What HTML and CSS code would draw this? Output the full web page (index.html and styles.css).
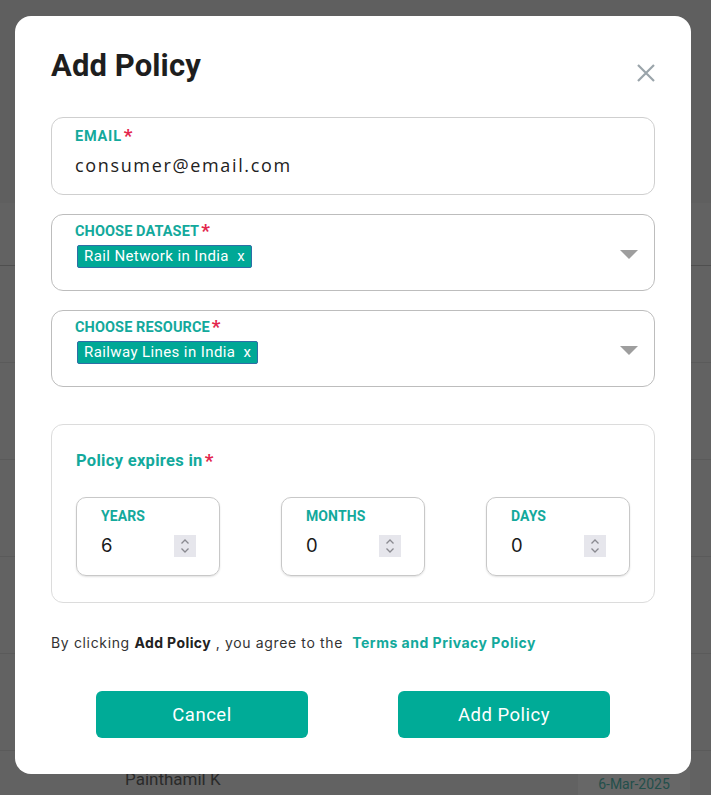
FILE: index.html
```html
<!DOCTYPE html>
<html>
<head>
<meta charset="utf-8">
<link rel="stylesheet" href="styles.css">
</head>
<body>
<div class="backdrop">
  <div class="bg-top"></div>
  <div class="bg-head"></div>
  <div class="bg-row"></div>
  <div class="bg-row"></div>
  <div class="bg-row"></div>
  <div class="bg-row"></div>
  <div class="bg-row"></div>
  <div class="bg-last">
    <span class="bg-name">Painthamil K</span>
    <span class="bg-date">6-Mar-2025</span>
  </div>
</div>

<div class="modal">
  <div class="modal-head">
    <h1 class="title">Add Policy</h1>
    <svg class="close" width="20" height="20" viewBox="0 0 20 20"><path d="M2 2 L18 18 M18 2 L2 18" stroke="#9aa4aa" stroke-width="2.2" fill="none"/></svg>
  </div>

  <div class="field field-email">
    <div class="label">EMAIL<span class="req">*</span></div>
    <div class="value">consumer@email.com</div>
  </div>

  <div class="field field-select">
    <div class="select-body">
      <div class="label">CHOOSE DATASET<span class="req">*</span></div>
      <div class="chips"><span class="chip">Rail Network in India&nbsp; x</span></div>
    </div>
    <svg class="caret" width="18" height="10" viewBox="0 0 18 10"><path d="M0 0 H18 L9 9 Z" fill="#9e9e9e"/></svg>
  </div>

  <div class="field field-select">
    <div class="select-body">
      <div class="label">CHOOSE RESOURCE<span class="req">*</span></div>
      <div class="chips"><span class="chip">Railway Lines in India&nbsp; x</span></div>
    </div>
    <svg class="caret" width="18" height="10" viewBox="0 0 18 10"><path d="M0 0 H18 L9 9 Z" fill="#9e9e9e"/></svg>
  </div>

  <div class="expiry">
    <div class="expiry-title">Policy expires in<span class="req">*</span></div>
    <div class="expiry-row">
      <div class="num-box">
        <div class="label">YEARS</div>
        <div class="num-line"><span class="num">6</span><span class="spin"><svg width="10" height="16" viewBox="0 0 10 16"><path d="M1.5 5.5 L5 2 L8.5 5.5 M1.5 10.5 L5 14 L8.5 10.5" stroke="#8a8a90" stroke-width="1.3" fill="none"/></svg></span></div>
      </div>
      <div class="num-box">
        <div class="label">MONTHS</div>
        <div class="num-line"><span class="num">0</span><span class="spin"><svg width="10" height="16" viewBox="0 0 10 16"><path d="M1.5 5.5 L5 2 L8.5 5.5 M1.5 10.5 L5 14 L8.5 10.5" stroke="#8a8a90" stroke-width="1.3" fill="none"/></svg></span></div>
      </div>
      <div class="num-box">
        <div class="label">DAYS</div>
        <div class="num-line"><span class="num">0</span><span class="spin"><svg width="10" height="16" viewBox="0 0 10 16"><path d="M1.5 5.5 L5 2 L8.5 5.5 M1.5 10.5 L5 14 L8.5 10.5" stroke="#8a8a90" stroke-width="1.3" fill="none"/></svg></span></div>
      </div>
    </div>
  </div>

  <p class="terms">By clicking <b>Add Policy</b> , you agree to the &nbsp;<a class="terms-link">Terms and Privacy Policy</a></p>

  <div class="actions">
    <button class="btn">Cancel</button>
    <button class="btn">Add Policy</button>
  </div>
</div>
</body>
</html>
```

FILE: styles.css
```css
* { box-sizing: border-box; }
html, body { margin: 0; padding: 0; }
body {
  width: 711px;
  height: 795px;
  overflow: hidden;
  background: #626262;
  font-family: "Inter", "Liberation Sans", sans-serif;
  position: relative;
}

.backdrop { display: flex; flex-direction: column; }
.bg-top { height: 203px; background: #5f5f5f; flex: none; }
.bg-head { height: 63px; border-bottom: 1px solid #4f4f4f; flex: none; }
.bg-row { height: 97px; border-bottom: 1px solid #5a5a5a; flex: none; }
.bg-last { height: 44px; display: flex; align-items: flex-start; flex: none; }
.bg-name {
  margin: 18px 0 0 125px;
  font-family: Roboto, sans-serif;
  font-size: 17px;
  line-height: 20px;
  color: #2a2a2a;
}
.bg-date {
  margin-left: auto;
  margin-right: 21px;
  margin-top: 17px;
  width: 112px;
  height: 27px;
  padding-top: 8px;
  background: #676767;
  text-align: center;
  font-family: Roboto, sans-serif;
  font-size: 14px;
  line-height: 16px;
  color: #234f4b;
}

.modal {
  position: absolute;
  left: 15px;
  top: 16px;
  width: 676px;
  height: 758px;
  background: #fff;
  border-radius: 16px;
  padding: 0 36px;
  display: flex;
  flex-direction: column;
}

.modal-head {
  display: flex;
  justify-content: space-between;
  align-items: flex-start;
  height: 101px;
  padding-top: 31px;
}
.title {
  margin: 0;
  font-family: Roboto, sans-serif;
  font-weight: 700;
  font-size: 31px;
  line-height: 38px;
  color: #1e1e1e;
  letter-spacing: 0.1px;
}
.close { margin-top: 16px; margin-right: -1px; }

.field {
  border: 1px solid #cfcfcf;
  border-radius: 12px;
  padding: 10px 23px 0 23px;
}
.field-email { height: 78px; }
.label {
  font-family: Roboto, sans-serif;
  font-weight: 700;
  font-size: 14.5px;
  line-height: 18px;
  color: #13a99c;
  letter-spacing: 0.1px;
}
.field-email .label { letter-spacing: 0.8px; }
.req { color: #e3264c; font-size: 19px; margin-left: 2px; vertical-align: -1px; line-height: 10px; letter-spacing: 0; }
.value {
  margin-top: 8px;
  font-family: "Open Sans", sans-serif;
  font-size: 18px;
  line-height: 22px;
  color: #222;
  letter-spacing: 1.65px;
}

.field-select {
  margin-top: 19px;
  height: 77px;
  display: flex;
  align-items: center;
  padding-top: 0;
  padding-right: 16px;
  border-color: #bdbdbd;
}
.select-body { flex: 1; align-self: flex-start; padding-top: 8px; }
.chips { margin-top: 4px; margin-left: 2px; display: flex; }
.chip {
  display: inline-block;
  background: #00a896;
  border: 1px solid #2f6ea6;
  border-radius: 2px;
  color: #fff;
  font-family: Roboto, sans-serif;
  font-size: 15px;
  line-height: 21px;
  padding: 0 6px;
  letter-spacing: 0.4px;
}
.caret { margin-top: 4px; }

.expiry {
  margin-top: 37px;
  height: 179px;
  border: 1px solid #dcdcdc;
  border-radius: 12px;
  padding: 26px 24px 0 24px;
}
.expiry-title {
  font-family: Roboto, sans-serif;
  font-weight: 700;
  font-size: 16.5px;
  line-height: 20px;
  color: #13a99c;
  letter-spacing: 0.3px;
}
.expiry-row {
  margin-top: 26px;
  display: flex;
  justify-content: space-between;
}
.num-box {
  width: 144px;
  height: 79px;
  border: 1px solid #c8c8c8;
  border-radius: 10px;
  box-shadow: 0 1px 2px rgba(0,0,0,0.12);
  padding: 9px 23px 0 24px;
}
.num-box .label { font-size: 14px; }
.num-line {
  margin-top: 10px;
  display: flex;
  align-items: center;
  justify-content: space-between;
}
.num {
  font-family: Inter, sans-serif;
  font-size: 18.5px;
  color: #1a1a1a;
  margin-top: -3px;
}
.spin {
  width: 22px;
  height: 22px;
  background: #e6e6ec;
  display: flex;
  align-items: center;
  justify-content: center;
}

.terms {
  margin: 30px 0 0 0;
  font-family: Inter, sans-serif;
  font-size: 14px;
  line-height: 20px;
  color: #333;
  letter-spacing: 0.65px;
}
.terms b { font-weight: 700; color: #222; letter-spacing: 0.4px; }
.terms-link { color: #13a99c; font-weight: 700; letter-spacing: 0.5px; }

.actions {
  margin-top: 38px;
  display: flex;
  justify-content: space-between;
  padding: 0 45px;
}
.btn {
  width: 212px;
  height: 47px;
  border: none;
  border-radius: 6px;
  background: #00ab97;
  color: #fff;
  font-family: Roboto, sans-serif;
  font-size: 18.5px;
  font-weight: 400;
  letter-spacing: 0.5px;
}
```
